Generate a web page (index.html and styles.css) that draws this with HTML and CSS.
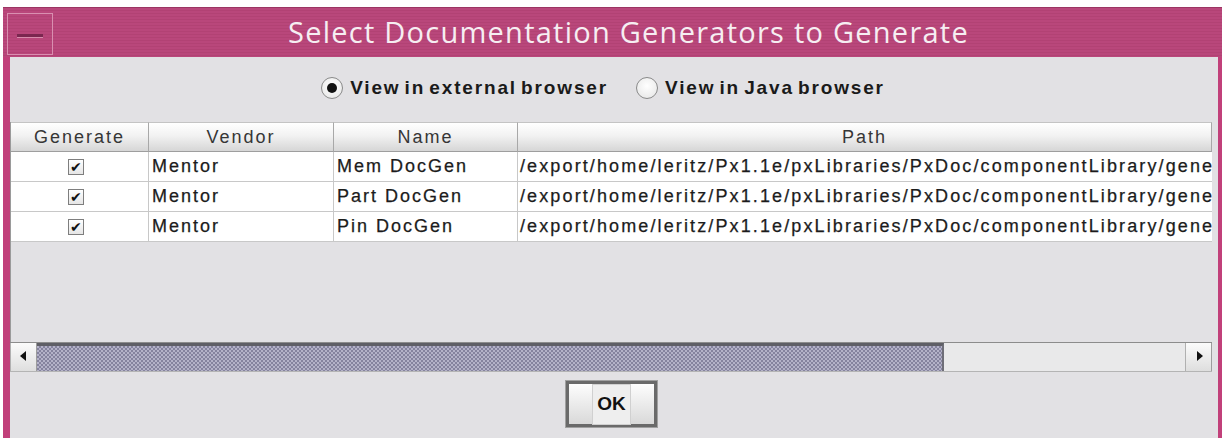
FILE: index.html
```html
<!DOCTYPE html>
<html lang="en">
<head>
<meta charset="utf-8">
<title>Select Documentation Generators to Generate</title>
<link rel="stylesheet" href="styles.css">
</head>
<body>
<div class="window">
  <div class="titlebar">
    <div class="menu-btn"><span class="dash"></span></div>
    <div class="title">Select Documentation Generators to Generate</div>
  </div>
  <div class="content">
    <div class="radios">
      <label class="radio"><span class="dot on"></span>View in external browser</label>
      <label class="radio"><span class="dot"></span>View in Java browser</label>
    </div>

    <div class="table-pane">
      <div class="grid">
        <div class="th">Generate</div>
        <div class="th">Vendor</div>
        <div class="th">Name</div>
        <div class="th">Path</div>

        <div class="td check"><span class="box">&#10004;</span></div>
        <div class="td">Mentor</div>
        <div class="td">Mem DocGen</div>
        <div class="td path">/export/home/leritz/Px1.1e/pxLibraries/PxDoc/componentLibrary/generators</div>

        <div class="td check"><span class="box">&#10004;</span></div>
        <div class="td">Mentor</div>
        <div class="td">Part DocGen</div>
        <div class="td path">/export/home/leritz/Px1.1e/pxLibraries/PxDoc/componentLibrary/generators</div>

        <div class="td check"><span class="box">&#10004;</span></div>
        <div class="td">Mentor</div>
        <div class="td">Pin DocGen</div>
        <div class="td path">/export/home/leritz/Px1.1e/pxLibraries/PxDoc/componentLibrary/generators</div>
      </div>
    </div>

    <div class="hscroll">
      <div class="arrow left"></div>
      <div class="track"><div class="thumb"></div></div>
      <div class="arrow right"></div>
    </div>

    <div class="actions">
      <button class="ok"><span class="ok-label">OK</span></button>
    </div>
  </div>
</div>
</body>
</html>
```

FILE: styles.css
```css
html, body {
  margin: 0;
  padding: 0;
  background: #ffffff;
  height: 100%;
  overflow: hidden;
}

.window {
  margin: 7px 0 0 3px;
  width: 1219px;
  height: 431px;
  background: #c1407a;
  display: flex;
  flex-direction: column;
}

/* ---- title bar ---- */
.titlebar {
  height: 50px;
  flex: none;
  display: flex;
  align-items: stretch;
  background: repeating-linear-gradient(to bottom, #b9477b 0 2px, #b24274 2px 3px);
  border-top: 1px solid #9c3563;
  box-sizing: border-box;
}

.menu-btn {
  width: 46px;
  margin: 5px 0 2px 4px;
  border: 1px solid #d98fb0;
  box-sizing: border-box;
  display: flex;
  align-items: center;
  justify-content: center;
}

.dash {
  width: 26px;
  height: 3px;
  background: #7b2750;
  border-bottom: 1px solid #d88cac;
  margin-top: 4px;
}

.title {
  flex: 1;
  text-align: center;
  color: #f6eef2;
  font-family: "Open Sans", "Noto Sans", sans-serif;
  font-size: 29px;
  line-height: 47px;
  letter-spacing: 1.25px;
  padding-right: 18px;
}

/* ---- dialog body ---- */
.content {
  flex: 1;
  margin: 0 4px 0 7px;
  background: #e2e1e4;
  display: flex;
  flex-direction: column;
  font-family: "Liberation Sans", Arial, sans-serif;
  color: #1e1e1e;
}

.radios {
  display: flex;
  justify-content: center;
  gap: 28px;
  padding: 17px 0 0 0;
  height: 28px;
  margin-left: -22px;
}

.radio {
  display: flex;
  align-items: center;
  gap: 7px;
  font-weight: bold;
  font-size: 19px;
  letter-spacing: 1.85px;
  word-spacing: -3px;
  color: #1a1a1a;
}

.dot {
  width: 22px;
  height: 22px;
  border-radius: 50%;
  border: 1px solid #8a8a8a;
  background: radial-gradient(circle at 50% 40%, #ffffff, #e4e4e4);
  box-sizing: border-box;
  position: relative;
}

.dot.on::after {
  content: "";
  position: absolute;
  left: 5px;
  top: 5px;
  width: 10px;
  height: 10px;
  border-radius: 50%;
  background: #111111;
}

/* ---- table ---- */
.table-pane {
  margin: 20px 6px 0 0;
  height: 220px;
  border-left: 1px solid #9a9a9a;
  box-sizing: border-box;
  overflow: hidden;
}

.grid {
  display: grid;
  grid-template-columns: 138px 185px 184px 1fr;
  grid-auto-rows: 30px;
}

.th {
  background: linear-gradient(to bottom, #ffffff 0%, #f2f2f2 45%, #d6d6d6 100%);
  border-right: 1px solid #a8a8a8;
  border-bottom: 1px solid #9e9e9e;
  border-top: 1px solid #c4c4c4;
  box-sizing: border-box;
  text-align: center;
  font-size: 18px;
  line-height: 28px;
  letter-spacing: 2px;
  color: #363636;
}

.td {
  background: #ffffff;
  border-right: 1px solid #c8c8c8;
  border-bottom: 1px solid #c8c8c8;
  box-sizing: border-box;
  font-size: 18px;
  line-height: 29px;
  padding-left: 3px;
  letter-spacing: 2px;
  white-space: nowrap;
  overflow: hidden;
  color: #1c1c1c;
  -webkit-text-stroke: 0.25px #1c1c1c;
}

/* long paths run past the column and are clipped by it */
.td.path {
  padding-left: 2px;
  letter-spacing: 2.12px;
  border-right: none;
}

.td.check {
  display: flex;
  align-items: center;
  justify-content: center;
  padding: 0 7px 0 0;
  -webkit-text-stroke: 0;
}

.box {
  width: 16px;
  height: 16px;
  border: 1px solid #7e7e7e;
  background: linear-gradient(to bottom, #ffffff, #e6e6e6);
  box-sizing: border-box;
  font-size: 14px;
  line-height: 15px;
  letter-spacing: 0;
  text-align: center;
  color: #111111;
}

/* ---- horizontal scroll bar ---- */
.hscroll {
  height: 30px;
  margin-right: 6px;
  display: flex;
  border-top: 1px solid #8c8c8c;
  border-bottom: 1px solid #b4b4b4;
  background: #e9e9ea;
  box-sizing: border-box;
}

.arrow {
  width: 27px;
  flex: none;
  background: linear-gradient(to bottom, #fbfbfb, #dedede);
  border-left: 1px solid #b0b0b0;
  border-right: 1px solid #9c9c9c;
  box-sizing: border-box;
  position: relative;
}

.arrow::after {
  content: "";
  position: absolute;
  top: 8px;
  width: 0;
  height: 0;
  border-top: 5px solid transparent;
  border-bottom: 5px solid transparent;
}

.arrow.left::after {
  left: 9px;
  border-right: 6px solid #111111;
}

.arrow.right::after {
  left: 11px;
  border-left: 6px solid #111111;
}

.track {
  flex: 1;
  display: flex;
}

.thumb {
  width: 907px;
  border-top: 3px solid #5f5f66;
  border-right: 2px solid #6e6e78;
  box-sizing: border-box;
  background-color: #b4b2c8;
  background-image:
    linear-gradient(45deg, #85839e 25%, transparent 25%, transparent 75%, #85839e 75%),
    linear-gradient(45deg, #85839e 25%, transparent 25%, transparent 75%, #85839e 75%);
  background-size: 4px 4px;
  background-position: 0 0, 2px 2px;
}

/* ---- button row ---- */
.actions {
  display: flex;
  justify-content: center;
  padding: 9px 0 0 0;
  margin-left: -5px;
}

.ok {
  width: 91px;
  height: 46px;
  border: 3px solid #6a6a6a;
  outline: 1px solid #a0a0a0;
  background: linear-gradient(to bottom, #fdfdfd, #d9d9d9);
  display: flex;
  align-items: center;
  justify-content: center;
  padding: 0;
  box-sizing: border-box;
}

.ok-label {
  font-family: "Liberation Sans", Arial, sans-serif;
  font-weight: bold;
  font-size: 19px;
  color: #111111;
  padding: 8px 4px 9px;
  background: #eeeeee;
  border: 1px solid #d0d0d0;
}
```
